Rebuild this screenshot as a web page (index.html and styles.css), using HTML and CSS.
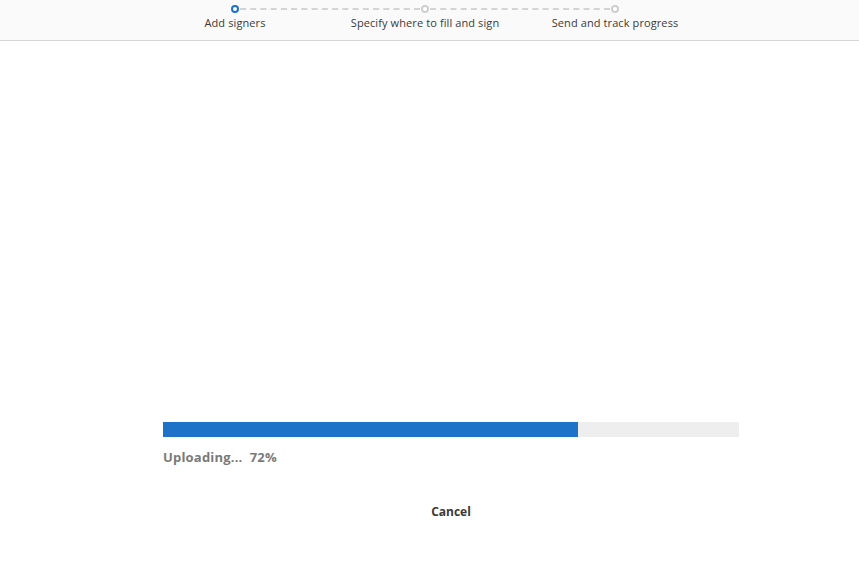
FILE: index.html
```html
<!DOCTYPE html>
<html>
<head>
<meta charset="utf-8">
<link rel="stylesheet" href="styles.css">
</head>
<body>
<header class="header">
  <div class="steps">
    <div class="track">
      <span class="dot dot-active"></span>
      <span class="dash"></span>
      <span class="dot"></span>
      <span class="dash"></span>
      <span class="dot"></span>
    </div>
    <div class="labels">
      <span class="label">Add signers</span>
      <span class="label">Specify where to fill and sign</span>
      <span class="label">Send and track progress</span>
    </div>
  </div>
</header>
<main class="main">
  <div class="progress">
    <div class="bar"><div class="fill" style="width:72%"></div></div>
    <div class="status">Uploading...&nbsp; 72%</div>
    <div class="actions"><span class="cancel">Cancel</span></div>
  </div>
</main>
</body>
</html>
```

FILE: styles.css
```css
* { box-sizing: border-box; }
html, body { margin: 0; padding: 0; background: #fff; }
body { font-family: "Open Sans", "Noto Sans", sans-serif; width: 859px; height: 571px; overflow: hidden; }

.header {
  height: 41px;
  background: #fafafa;
  border-bottom: 1px solid #d6d6d6;
}
.steps { margin-left: 140px; width: 570px; padding-top: 5px; }
.track {
  display: flex;
  align-items: center;
  margin-left: 91px;
  width: 388px;
  height: 8px;
}
.dot {
  width: 8px; height: 8px;
  border-radius: 50%;
  border: 2px solid #cfcfcf;
  background: #fff;
  flex: none;
}
.dot-active { border-color: #1e72c8; }
.dash {
  flex: 1;
  height: 0;
  border-top: 2px dashed #d4d4d4;
  margin: 0 1px;
}
.labels { display: flex; margin-top: 2px; }
.label {
  width: 190px;
  text-align: center;
  font-size: 11px;
  letter-spacing: 0.1px;
  line-height: 15px;
  color: #3a3a3a;
}

.main { padding-top: 381px; }
.progress { margin-left: 163px; width: 576px; }
.bar { height: 15px; background: #eeeeee; }
.fill { height: 100%; background: #1e72c8; }
.status {
  margin-top: 11px;
  font-size: 13px;
  letter-spacing: 0.2px;
  font-weight: 700;
  color: #7a7a7a;
  line-height: 18px;
}
.actions { text-align: center; margin-top: 33px; }
.cancel {
  font-size: 12px;
  font-weight: 700;
  color: #3a3a3a;
  line-height: 16px;
}
```
